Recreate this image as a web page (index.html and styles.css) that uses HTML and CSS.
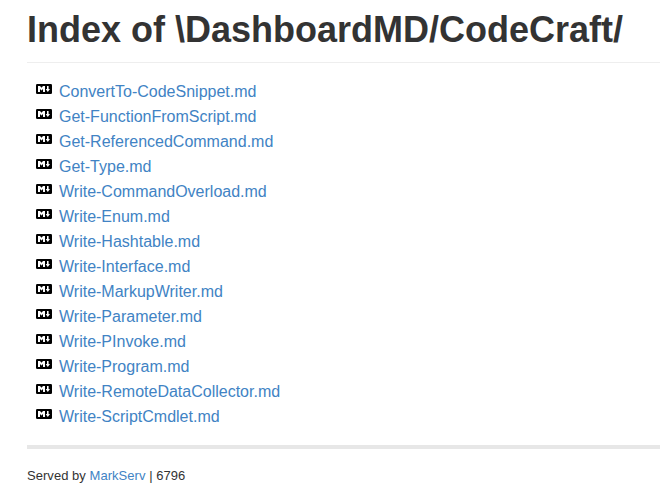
FILE: index.html
```html
<!DOCTYPE html>
<html lang="en">
<head>
<meta charset="utf-8">
<title>Index of \DashboardMD/CodeCraft/</title>
<link rel="stylesheet" href="styles.css">
</head>
<body>
<svg class="sprite" aria-hidden="true"><symbol id="md" viewBox="0 0 16 10"><rect width="16" height="10" rx="1.200" fill="#000"/><path d="M2 8V2h2l1.500 1.800L7 2h2v6H7V5L5.500 6.600 4 5v3zM11 2h1.600v3H14l-2.200 3.100L9.700 5H11z" fill="#fff"/></symbol></svg>
<article class="page">
<h1>Index of \DashboardMD/CodeCraft/</h1>
<ul class="files">
<li><svg class="icon"><use href="#md"/></svg><a href="#">ConvertTo-CodeSnippet.md</a></li>
<li><svg class="icon"><use href="#md"/></svg><a href="#">Get-FunctionFromScript.md</a></li>
<li><svg class="icon"><use href="#md"/></svg><a href="#">Get-ReferencedCommand.md</a></li>
<li><svg class="icon"><use href="#md"/></svg><a href="#">Get-Type.md</a></li>
<li><svg class="icon"><use href="#md"/></svg><a href="#">Write-CommandOverload.md</a></li>
<li><svg class="icon"><use href="#md"/></svg><a href="#">Write-Enum.md</a></li>
<li><svg class="icon"><use href="#md"/></svg><a href="#">Write-Hashtable.md</a></li>
<li><svg class="icon"><use href="#md"/></svg><a href="#">Write-Interface.md</a></li>
<li><svg class="icon"><use href="#md"/></svg><a href="#">Write-MarkupWriter.md</a></li>
<li><svg class="icon"><use href="#md"/></svg><a href="#">Write-Parameter.md</a></li>
<li><svg class="icon"><use href="#md"/></svg><a href="#">Write-PInvoke.md</a></li>
<li><svg class="icon"><use href="#md"/></svg><a href="#">Write-Program.md</a></li>
<li><svg class="icon"><use href="#md"/></svg><a href="#">Write-RemoteDataCollector.md</a></li>
<li><svg class="icon"><use href="#md"/></svg><a href="#">Write-ScriptCmdlet.md</a></li>
</ul>
<hr>
<footer>Served by <a href="#">MarkServ</a> | 6796</footer>
</article>
</body>
</html>
```
FILE: styles.css
```css
body { margin: 0; background: #fff; color: #333; font-family: "Liberation Sans", Arial, sans-serif; overflow: hidden; }
.sprite { display: none; }
.page { padding-left: 27px; }
h1 { margin: 0 0 16px; height: 62px; box-sizing: content-box; border-bottom: 1px solid #eee; font-size: 36px; line-height: 60px; font-weight: bold; white-space: nowrap; }
a { color: #4183c4; text-decoration: none; }
.files { list-style: none; margin: 0; padding: 0 0 0 9px; }
.files li { display: flex; align-items: flex-start; height: 25px; line-height: 25px; font-size: 16px; }
.icon { width: 16px; height: 10px; margin: 5px 7px 0 0; flex: none; }
hr { height: 4px; margin: 16px 0; border: 0; background: #e7e7e7; }
footer { font-size: 13px; line-height: 22px; letter-spacing: 0.040px; }
```
